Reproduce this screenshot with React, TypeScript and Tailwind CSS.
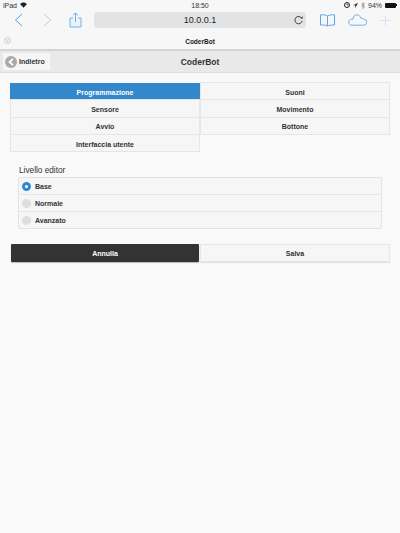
import React from 'react';

const tabs = [
  { label: 'Programmazione', active: true },
  { label: 'Suoni' },
  { label: 'Sensore' },
  { label: 'Movimento' },
  { label: 'Avvio' },
  { label: 'Bottone' },
  { label: 'Interfaccia utente' },
];

const levels = [
  { label: 'Base', checked: true },
  { label: 'Normale' },
  { label: 'Avanzato' },
];

const Toolbar = () => (
  <div className="h-[49px] bg-[#f7f7f7] border-b-2 border-[#d4d4d4] box-content">
    {/* status bar */}
    <div className="h-[10px] flex items-center justify-between px-[3px] text-[7px] leading-none text-[#333]">
      <div className="flex items-center gap-[3px] w-[100px]">
        <span>iPad</span>
        <svg width="7" height="6" viewBox="0 0 14 11" fill="#222">
          <path d="M7 11 0 3.500C4-.8 10-.8 14 3.500z" />
        </svg>
      </div>
      <span>18:50</span>
      <div className="flex items-center justify-end gap-[3px] w-[100px]">
        <svg width="6" height="6" viewBox="0 0 12 12">
          <circle cx="6" cy="6" r="5" fill="none" stroke="#222" strokeWidth="2" />
          <path d="M6 3v3h3" fill="none" stroke="#222" strokeWidth="1.500" />
        </svg>
        <svg width="5" height="5" viewBox="0 0 10 10" fill="#222">
          <path d="M10 0 0 4.500h4.500V10z" />
        </svg>
        <svg width="4" height="7" viewBox="0 0 8 14" fill="none" stroke="#777" strokeWidth="1.300">
          <path d="M1 4l6 6-3 3V1l3 3-6 6" />
        </svg>
        <span>94%</span>
        <div className="flex items-center">
          <div className="w-[11px] h-[5px] bg-[#111] rounded-[1px]" />
          <div className="w-px h-[2px] bg-[#111]" />
        </div>
      </div>
    </div>
    {/* browser buttons and address bar */}
    <div className="h-[16px] mt-[2px] flex items-center">
      <div className="w-[94px] flex items-center">
        <svg className="ml-[14px]" width="9" height="14" viewBox="0 0 9 14" fill="none" stroke="#4a9be8" strokeWidth="1">
          <path d="M8 1 1.500 7 8 13" />
        </svg>
        <svg className="ml-[20px]" width="9" height="14" viewBox="0 0 9 14" fill="none" stroke="#c8c8c8" strokeWidth="1">
          <path d="M1 1l6.500 6L1 13" />
        </svg>
        <svg className="ml-[17px]" width="13" height="16" viewBox="0 0 13 16" fill="none" stroke="#6fb1ec" strokeWidth="1">
          <path d="M4 6H1v9h11V6H9" fill="#eaf3fb" />
          <path d="M6.500 10V1M4 3.200 6.500 1 9 3.200" />
        </svg>
      </div>
      <div className="w-[212px] h-[16px] pt-[2px] bg-[#e2e3e5] rounded-[3px] relative flex items-center justify-center text-[9px] text-[#222]">
        10.0.0.1
        <svg className="absolute right-[2px] top-[3px]" width="11" height="11" viewBox="0 0 12 12" fill="none" stroke="#333" strokeWidth="1">
          <path d="M9.500 3.500A4 4 0 1 0 10 6.500" />
          <path d="M8 3.800h2.500V1.300" fill="#333" stroke="none" />
        </svg>
      </div>
      <svg className="ml-[14px]" width="15" height="13" viewBox="0 0 15 13" fill="none" stroke="#5ba6ea" strokeWidth="1">
        <path d="M7.500 2C6 .8 3 .8.500.800V11c2.500 0 5.500 0 7 1 1.500-1 4.500-1 7-1V.800C12 .8 9 .8 7.500 2zM7.500 2v10" />
      </svg>
      <svg className="ml-[13px]" width="19" height="12" viewBox="0 0 19 12" fill="none" stroke="#5ba6ea" strokeWidth="0.900">
        <path d="M4 11.200h11.500a3 3 0 0 0 .5-6C15.500 4.500 14 4 13 4.300 12 2 10.500.8 8.800.8 6.500.8 5 2.800 5 5 3 4.800.7 6 .7 8.200c0 1.800 1.300 3 3.300 3z" />
      </svg>
      <svg className="ml-[13px]" width="11" height="11" viewBox="0 0 11 11" fill="none" stroke="#d3e5f6" strokeWidth="1">
        <path d="M5.500 0v11M0 5.500h11" />
      </svg>
    </div>
    {/* open tab title */}
    <div className="h-[21px] pt-[7px] relative flex items-center justify-center text-[6.500px] font-bold text-[#222]">
      <svg className="absolute left-[4px] top-[9px]" width="7" height="7" viewBox="0 0 14 14" fill="none" stroke="#b5b5b5" strokeWidth="1.200">
        <circle cx="7" cy="7" r="6" />
        <path d="M5 4l2 6 2-6" />
      </svg>
      CoderBot
    </div>
  </div>
);

const Header = () => (
  <div className="h-[22px] pt-[2px] bg-[#e9e9e9] border-b border-[#dddddd] relative flex items-center justify-center">
    <span className="text-[8.500px] font-bold text-[#333]">CoderBot</span>
    <button className="absolute left-[3px] top-[2px] h-[17px] w-[47px] bg-[#f6f6f6] flex items-center text-[7px] font-bold text-[#333]">
      <span className="ml-[2px] mr-[2px] w-[12px] h-[12px] rounded-full bg-[#aaaaaa] flex items-center justify-center">
        <svg width="6" height="8" viewBox="0 0 6 8" fill="none" stroke="#fff" strokeWidth="1.800">
          <path d="M5 .8 1.500 4 5 7.200" />
        </svg>
      </span>
      <span className="pt-[2px]">Indietro</span>
    </button>
  </div>
);

const App = () => (
  <div className="w-[400px] h-[533px] bg-[#f9f9f9] overflow-hidden font-['Liberation_Sans',sans-serif]">
    <Toolbar />
    <Header />
    <div className="pt-[10px] px-[10px]">
      <div className="grid grid-cols-2 w-[380px]">
        {tabs.map((tab) => (
          <div
            key={tab.label}
            className={
              tab.active
                ? 'h-[17.250px] pt-[4px] bg-[#3388cc] border-b border-[#2f7fbf] flex items-center justify-center text-[7px] font-bold text-white'
                : 'h-[17.250px] pt-[4px] bg-[#f6f6f6] border border-t-0 border-[#e6e6e6] shadow-[0_-1px_0_#e6e6e6] flex items-center justify-center text-[7px] font-bold text-[#333]'
            }
          >
            {tab.label}
          </div>
        ))}
      </div>
      <div className="mt-[14px] ml-[9px] text-[8.250px] leading-[10px] text-[#333]">Livello editor</div>
      <div className="mt-[1px] ml-[8px] w-[364px] border border-[#e3e3e3] rounded-[2px] bg-[#f6f6f6]">
        {levels.map((level, i) => (
          <div
            key={level.label}
            className={
              i < levels.length - 1
                ? 'h-[17px] border-b border-[#e6e6e6] flex items-center pl-[3px] gap-[4px] text-[7px] font-bold text-[#333]'
                : 'h-[16px] flex items-center pl-[3px] gap-[4px] text-[7px] font-bold text-[#333]'
            }
          >
            {level.checked ? (
              <span className="w-[9px] h-[9px] rounded-full border-[3px] border-[#3388cc] bg-white" />
            ) : (
              <span className="w-[9px] h-[9px] rounded-full bg-[#dedede]" />
            )}
            <span className="pt-[2px]">{level.label}</span>
          </div>
        ))}
      </div>
      <div className="mt-[15px] flex gap-[1px] pl-[1px]">
        <button className="w-[188px] h-[18px] pt-[2px] bg-[#333333] rounded-[1px] shadow-[0_1px_1px_#bbbbbb] text-[7px] font-bold text-white">
          Annulla
        </button>
        <button className="w-[190px] h-[18px] pt-[2px] bg-[#f6f6f6] border border-[#e6e6e6] rounded-[1px] shadow-[0_1px_1px_#dddddd] text-[7px] font-bold text-[#333]">
          Salva
        </button>
      </div>
    </div>
  </div>
);

export default App;
